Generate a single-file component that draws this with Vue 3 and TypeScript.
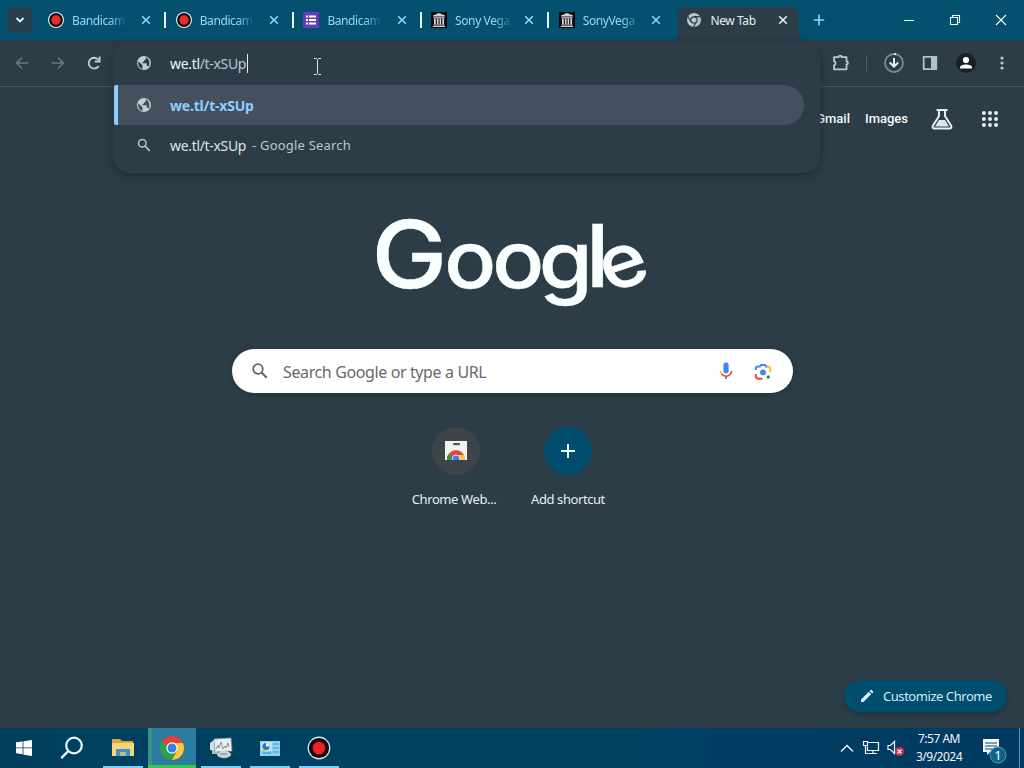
<script setup lang="ts">
interface Tab { title: string; icon: 'record' | 'list' | 'archive' | 'chrome'; width: number; active?: boolean; last?: boolean }
const tabs: Tab[] = [
  { title: 'Bandicam', icon: 'record', width: 54 },
  { title: 'Bandicam', icon: 'record', width: 54 },
  { title: 'Bandicam', icon: 'list', width: 54 },
  { title: 'Sony Vega', icon: 'archive', width: 56 },
  { title: 'SonyVega', icon: 'archive', width: 56, last: true },
  { title: 'New Tab', icon: 'chrome', width: 55, active: true },
]
const grid = [4, 10.2, 16.4]
</script>

<template>
  <div class="screen">
    <header class="strip">
      <div class="search-tabs">
        <svg width="12" height="12" viewBox="0 0 12 12"><path d="M2.500 4l3.500 3.500L9.500 4" fill="none" stroke="#e6f4fb" stroke-width="1.900" /></svg>
      </div>
      <div class="tabs">
        <div v-for="(t, i) in tabs" :key="i" class="tab" :class="{ active: t.active, plain: t.last }">
          <svg v-if="t.icon === 'record'" class="fav" viewBox="0 0 16 16"><circle cx="8" cy="8" r="8" fill="#e9edf0" /><circle cx="8" cy="8" r="6.900" fill="#140d10" /><circle cx="8" cy="8" r="4.700" fill="#e62b2b" /></svg>
          <svg v-else-if="t.icon === 'list'" class="fav" viewBox="0 0 16 16"><path fill="#673ab7" d="M0 0h16v16H0z" /><path fill="#fff" d="M3 3.500h2v2H3zm3 0h7v2H6zM3 7h2v2H3zm3 0h7v2H6zm-3 3.500h2v2H3zm3 0h7v2H6z" /></svg>
          <svg v-else-if="t.icon === 'archive'" class="fav" viewBox="0 0 16 16"><path fill="#090b0d" d="M0 0h16v16H0z" /><path fill="#d4d4d4" d="M8 1l6 2.500v1H2v-1zM2.500 5.200h11v1h-11zM3 6.500h1.800v6H3zm2.900 0h1.600v6H5.900zm2.700 0h1.600v6H8.600zm2.700 0h1.800v6h-1.800zM2.500 12.800h11v.8h-11zM2 14.100h12V15H2z" /></svg>
          <svg v-else class="fav" viewBox="0 0 16 16"><circle cx="8" cy="8" r="7" fill="#b9c5cc" /><circle cx="8" cy="8" r="3.200" fill="#b9c5cc" stroke="#2c3d47" stroke-width="1.200" /><path d="M8 4.700h6.300M5 9.700L2 4.500m8.500 5.300L7.500 15" stroke="#2c3d47" stroke-width="1.200" /></svg>
          <span class="tab-title" :style="{ width: t.width + 'px' }">{{ t.title }}</span>
          <svg class="close" width="10" height="10" viewBox="0 0 10 10"><path d="M1.200 1.200l7.600 7.600m0-7.600L1.200 8.800" stroke="currentColor" stroke-width="1.600" /></svg>
        </div>
      </div>
      <svg class="plus" width="12" height="12" viewBox="0 0 12 12"><path d="M6 .8v10.400M.8 6h10.400" stroke="#91d0f4" stroke-width="1.700" /></svg>
      <div class="controls">
        <svg viewBox="0 0 12 12"><path d="M1 6.500h10" /></svg>
        <svg viewBox="0 0 12 12"><path d="M1.500 3.500h7v7h-7zM3.500 3.500v-2h7v7h-2" /></svg>
        <svg viewBox="0 0 12 12"><path d="M1 1l10 10M11 1L1 11" /></svg>
      </div>
    </header>

    <div class="toolbar">
      <div class="nav">
        <svg class="dim" viewBox="0 0 16 16"><path d="M14.500 8H3M8 2.500L2.500 8 8 13.500" /></svg>
        <svg class="dim" viewBox="0 0 16 16"><path d="M1.500 8H13M8 2.500L13.500 8 8 13.500" /></svg>
        <svg viewBox="0 0 16 16"><path d="M12.700 11A5.400 5.400 0 1 1 12.300 4.700M13.600 1.600v4.900H8.800" /></svg>
      </div>
      <div class="actions">
        <svg class="puzzle" width="20" height="20" viewBox="0 0 20 20"><path d="M3 4.200h4.600a1.500 1.500 0 0 1 3 0h4.900v4.300a1.500 1.500 0 0 1 0 3v4.800H3v-4a2.200 2.200 0 0 0 0-4.200z" fill="none" stroke="#b9cad4" stroke-width="1.800" stroke-linejoin="round" /></svg>
        <i class="divider"></i>
        <svg width="20" height="20" viewBox="0 0 20 20"><circle cx="10" cy="10" r="9" fill="none" stroke="#7b8b95" stroke-width="1.800" /><path d="M10 1a9 9 0 0 1 2 .2" fill="none" stroke="#dce9f0" stroke-width="1.800" /><path d="M10 5v8.500M5.800 9.500L10 13.700l4.200-4.200" fill="none" stroke="#e4eff5" stroke-width="2" /></svg>
        <svg class="panel" width="16" height="16" viewBox="0 0 16 16"><path d="M1.700 1.800h12.600v12.400H1.700z" fill="none" stroke="#afc2ce" stroke-width="1.800" /><path d="M9 1.500h5v13H9z" fill="#afc2ce" /></svg>
        <svg class="profile" width="20" height="20" viewBox="0 0 20 20"><circle cx="10" cy="10" r="10" fill="#1c1e20" /><circle cx="10" cy="7" r="3.100" fill="#fff" /><path d="M4 15.500v-1c0-4 12-4 12 0v1z" fill="#fff" /></svg>
        <svg class="dots" width="4" height="16" viewBox="0 0 4 16"><g fill="#b9cad4"><circle cx="2" cy="3" r="1.600" /><circle cx="2" cy="8" r="1.600" /><circle cx="2" cy="13" r="1.600" /></g></svg>
      </div>
    </div>

    <main class="page">
      <nav class="links">
        <a>Gmail</a><a>Images</a>
        <svg class="flask" width="22" height="24" viewBox="0 0 22 24"><path d="M5.500 3h11M8 3v6L2 18.500c-1 1.700 0 3 1.500 3h15c1.500 0 2.500-1.300 1.500-3L14 9V3" fill="none" stroke="#e8f0f4" stroke-width="2" /><path d="M8 13h6l4 6.500H4z" fill="#dce6ea" /></svg>
        <svg width="20" height="20" viewBox="0 0 20.400 20.400"><template v-for="y in grid" :key="y"><circle v-for="x in grid" :key="x" :cx="x" :cy="y" r="2" fill="#e8f0f4" /></template></svg>
      </nav>
      <svg class="logo" width="280" height="100" viewBox="370 215 280 100" role="img" aria-label="Google">
        <text transform="translate(376 0) scale(1.090 1)" y="288 288 288 289.500 287 293" x="-6 60.800 104.900 147.500 190.500 212" rotate="0 0 0 0 0 -20"><tspan class="cap">G</tspan><tspan>oo</tspan><tspan class="low">g</tspan><tspan class="tall">l</tspan><tspan class="tilt">e</tspan></text>
      </svg>
      <div class="searchbox">
        <svg width="18" height="18" viewBox="0 0 18 18"><circle cx="7" cy="7" r="4.800" fill="none" stroke="#62666a" stroke-width="1.800" /><path d="M10.500 10.500l5.200 5.200" stroke="#62666a" stroke-width="2" /></svg>
        <span>Search Google or type a URL</span>
        <svg class="mic" width="14" height="20" viewBox="0 0 14 20"><rect x="4.400" y="1.400" width="5.200" height="11" rx="2.600" fill="#4285f4" /><path d="M1.500 10a5.500 5.500 0 0 0 1.600 3.600" fill="none" stroke="#fbbc04" stroke-width="1.600" /><path d="M2.700 13.100A5.500 5.500 0 0 0 12.500 10" fill="none" stroke="#ea4335" stroke-width="1.600" /><path d="M7 15.500V18" stroke="#34a853" stroke-width="1.800" /></svg>
        <svg class="lens" width="18" height="18" viewBox="0 0 18 18" fill="none" stroke-width="1.900"><path d="M1.800 7V5.800c0-1.500 1-2.300 2.300-2.300h2L7 2h4l1 1.500h1.500" stroke="#4285f4" /><path d="M13.200 3.500c2 0 3 1 3 2.600v3" stroke="#fbbc04" /><path d="M1.800 11v2c0 1.800 1 2.700 2.700 2.700h4" stroke="#ea4335" /><circle cx="9" cy="9.400" r="2.900" fill="#4285f4" /><circle cx="14.300" cy="14" r="1.700" fill="#34835a" /></svg>
      </div>
      <div class="shortcuts">
        <div class="shortcut">
          <div class="disc web"><svg width="24" height="24" viewBox="0 0 24 24"><path d="M1 2h22v19H1z" fill="#f1f3f3" /><rect x="9" y="4" width="7" height="2.200" rx="1" fill="#50575b" /><clipPath id="storeClip"><path d="M1 2h22v19H1z" /></clipPath><g clip-path="url(#storeClip)"><circle cx="12" cy="20" r="9" fill="#e14b3f" /><path d="M12 20L4.200 15.500A9 9 0 0 0 3 21h9z" fill="#279653" /><path d="M12 20l3-4h5c1 1.500 1.200 3 1 5h-9z" fill="#f6c844" /><circle cx="12" cy="20" r="4.200" fill="#fff" /><circle cx="12" cy="20" r="3.400" fill="#427cec" /></g></svg></div>
          <span class="web-label">Chrome Web...</span>
        </div>
        <div class="shortcut">
          <div class="disc add"><svg width="16" height="16" viewBox="0 0 16 16"><path d="M8 1v14M1 8h14" stroke="#f3faff" stroke-width="2" /></svg></div>
          <span class="add-label">Add shortcut</span>
        </div>
      </div>
      <button class="customize"><svg width="14" height="14" viewBox="0 0 14 14"><path d="M1 10.500L8.700 2.800l2.500 2.500L3.500 13H1zM9.500 2l1-1c.4-.4.8-.4 1.200 0L13 2.300c.4.4.4.8 0 1.200l-1 1z" fill="#d1edfc" /></svg><span>Customize Chrome</span></button>
    </main>

    <section class="omnibox">
      <div class="row entry">
        <svg class="globe" viewBox="0 0 16 16"><circle cx="8" cy="8" r="7" fill="#c2ccd3" /><path d="M2.300 6.200l4.200 4v3.600c-3-.7-5-3.600-4.200-7.600zM9.800 2.300v1.500c0 1-.9 1.500-1.800 1.500v1.400H6.500v1.500h4.200v2.600h1.200l.8 1C14 10 14 4 9.800 2.300z" fill="#2c3d47" /></svg>
        <span class="url"><b>we.tl</b>/t-xSUp</span><i class="caret"></i>
      </div>
      <div class="row selected">
        <svg class="globe" viewBox="0 0 16 16"><circle cx="8" cy="8" r="7" fill="#c2ccd3" /><path d="M2.300 6.200l4.200 4v3.600c-3-.7-5-3.600-4.200-7.600zM9.800 2.300v1.500c0 1-.9 1.500-1.800 1.500v1.400H6.500v1.500h4.200v2.600h1.200l.8 1C14 10 14 4 9.800 2.300z" fill="#44505d" /></svg>
        <span class="match">we.tl/t-xSUp</span>
      </div>
      <div class="row">
        <svg class="globe" viewBox="0 0 16 16"><circle cx="6.300" cy="6.300" r="3.800" fill="none" stroke="#b7c4cc" stroke-width="1.500" /><path d="M9 9l4.800 4.800" stroke="#b7c4cc" stroke-width="1.700" /></svg>
        <span class="query">we.tl/t-xSUp</span><span class="hint">- Google Search</span>
      </div>
    </section>
    <svg class="ibeam" width="9" height="17" viewBox="0 0 9 17"><path d="M1 .5h2.500l1 1 1-1H8M4.500 1.500v14M1 16.500h2.500l1-1 1 1H8" fill="none" stroke="#dde5e9" /></svg>

    <footer class="taskbar">
      <div class="task start"><svg width="16" height="16" viewBox="0 0 16 16"><path d="M0 2.300l6.600-.9v6H0zm7.400-1L16 0v7.400H7.400zM0 8.200h6.600v6L0 13.300zm7.400 0H16V16l-8.600-1.300z" fill="#fff" /></svg></div>
      <div class="task find"><svg width="24" height="24" viewBox="0 0 24 24"><circle cx="14" cy="9.500" r="7.800" fill="none" stroke="#eafaff" stroke-width="2.200" /><path d="M8.300 15l-7 7.200" stroke="#eafaff" stroke-width="2.400" /></svg></div>
      <div class="task open folder"><svg width="22" height="20" viewBox="0 0 22 20"><path d="M0 1h8l2 2h11v5H0z" fill="#dba83d" /><path d="M0 5h22v13H0z" fill="#f5d779" /><path d="M4 11h14v7h-4v-4H8v4H4z" fill="#428fca" /><path d="M8 14h6v4H8z" fill="#b9b98b" /></svg></div>
      <div class="task current"><svg width="24" height="24" viewBox="0 0 24 24"><circle cx="12" cy="12" r="12" fill="#e63f33" /><path d="M12 12L1.600 6A12 12 0 0 0 12 24l5-9z" fill="#25a352" /><path d="M12 7h10.900A12 12 0 0 1 12 24l5-9z" fill="#fbca32" /><circle cx="12" cy="12" r="5.700" fill="#fff" /><circle cx="12" cy="12" r="4.500" fill="#3f7ee2" /></svg></div>
      <div class="task open monitor"><svg width="24" height="22" viewBox="0 0 24 22"><path d="M1 6l5-4v12l-5-1z" fill="#d5dddf" /><path d="M3 13h6v4H3z" fill="#aebbc0" /><path d="M5 2l17-1 1 13-17 1z" fill="#e8eeef" stroke="#899ba3" stroke-width=".7" /><path d="M7 12l2-4 1 3 2-6 2 7 2-3 1 2 2-5 1 4" fill="none" stroke="#8296a1" /><ellipse cx="15" cy="17.500" rx="7" ry="3.700" fill="#c9d2d2" /><path d="M11 17h7" stroke="#7a888d" /></svg></div>
      <div class="task open panelapp"><svg width="20" height="15" viewBox="0 0 20 15"><path d="M0 0h20v15H0z" fill="#8bd2f4" /><path d="M1 1h11v9H1zm13 1h5v2h-5zm0 4h5v2h-5zm0 4h5v2h-5z" fill="#b7e6fa" /><circle cx="6" cy="5.500" r="3.500" fill="#2878b8" /><path d="M6 5.500V2a3.500 3.500 0 0 1 3.500 3.500z" fill="#e8f7fb" /><path d="M13 3h6m-6 4h6m-6 4h6M3 12h8" stroke="#2486bd" /><path d="M1 9h4v2H1z" fill="#d8c65a" /></svg></div>
      <div class="task open rec"><svg width="24" height="24" viewBox="0 0 24 24"><circle cx="12" cy="12" r="11.400" fill="#dce6ea" /><circle cx="12" cy="12" r="10.100" fill="#12090d" /><circle cx="12" cy="12" r="6.300" fill="#f02028" /></svg></div>
      <div class="tray">
        <svg width="14" height="9" viewBox="0 0 14 9"><path d="M1 7.500l6-6 6 6" fill="none" stroke="#f2f7fa" stroke-width="1.400" /></svg>
        <svg class="net" width="18" height="16" viewBox="0 0 18 16"><path d="M6 2.500h10.500v8H5.500v-4M11 10.500v3M7 13.500h8M1.500 1.500h4v4h-4zM3.500 5.500v8h3" fill="none" stroke="#f2f7fa" stroke-width="1.200" /></svg>
        <svg class="sound" width="18" height="17" viewBox="0 0 18 17"><path d="M1 5.500h2.500l4-4v12l-4-4H1z" fill="none" stroke="#f2f7fa" stroke-width="1.200" /><circle cx="12.500" cy="11.500" r="4.600" fill="#d12d3d" /><path d="M10.500 9.500l4 4m0-4l-4 4" stroke="#fff" stroke-width="1.200" /></svg>
        <div class="clock"><span>7:57 AM</span><span>3/9/2024</span></div>
        <svg class="notice" width="26" height="26" viewBox="0 0 26 26"><path d="M1 1h16v13H8l-3 3v-3H1z" fill="#f5fafc" /><path d="M3 5h12M3 8h12M3 11h8" stroke="#064868" /><circle cx="16" cy="17" r="8" fill="#09648b" stroke="#6595aa" /><text x="16" y="21.500" text-anchor="middle">1</text></svg>
      </div>
      <i class="desktop"></i>
    </footer>
  </div>
</template>

<style>
html, body { margin: 0; overflow: hidden; }
</style>
<style scoped>
* { box-sizing: border-box; }
svg { display: block; flex: none; }
.screen { position: relative; width: 1024px; height: 768px; overflow: hidden; display: flex; flex-direction: column; background: #2c3d47; font-family: "Noto Sans", "Open Sans", sans-serif; }
.strip { height: 40px; display: flex; background: #04506f; flex: none; }
.search-tabs { width: 26px; height: 26px; margin: 7px 8px 0 7px; border-radius: 8px; background: #263e4e; display: grid; place-items: center; }
.tabs { display: flex; width: 758px; }
.tab { width: 127.700px; height: 40px; padding-left: 7px; display: flex; align-items: center; position: relative; color: #96d5f5; flex: none; }
.tab:not(.active):not(.plain)::after { content: ""; width: 2px; height: 16px; margin: 0 2.500px 0 13px; background: #e5f3f7; }
.tab.active { width: 120px; height: 33px; margin: 7px 0 0 -1px; padding: 0 0 7px 8px; border-radius: 8px 8px 0 0; background: #2c3d47; color: #e3edf2; }
.tab.active::after { content: ""; position: absolute; right: -8px; bottom: 0; width: 8px; height: 8px; background: radial-gradient(circle at 100% 0, transparent 7.500px, #2c3d47 8px); }
.fav { width: 16px; height: 16px; }
.tab-title { margin: 1px 0 0 8px; font-size: 12px; line-height: 18px; overflow: hidden; white-space: nowrap; letter-spacing: -.4px; -webkit-mask-image: linear-gradient(90deg, #000 70%, #0002 98%); }
.active .tab-title { -webkit-mask-image: none; letter-spacing: -.4px; }
.close { margin-left: auto; margin-right: 10px; }
.tab:not(.active):not(.plain) .close { margin-right: 0; }
.tab.plain .close { margin-right: 18px; }
.plus { margin: 14px 0 0 14px; }
.controls { margin-left: auto; display: flex; gap: 34px; padding: 14px 17px 0 0; }
.controls svg { width: 12px; height: 12px; fill: none; stroke: #f3fafc; stroke-width: 1.100; }
.toolbar { height: 47px; flex: none; display: flex; align-items: center; justify-content: space-between; border-bottom: 1px solid #435460; }
.nav { display: flex; gap: 20px; padding-left: 14px; }
.nav svg { width: 16px; height: 16px; fill: none; stroke: #c4d0d7; stroke-width: 1.800; }
.nav .dim { stroke: #6a7983; stroke-width: 1.500; }
.actions { display: flex; align-items: center; padding-right: 20px; }
.divider { width: 1px; height: 16px; background: #50616e; margin: 0 17px 0 15px; }
.panel { margin-left: 18px; }
.profile { margin-left: 18px; }
.dots { margin-left: 24px; }
.page { position: relative; height: 641px; display: flex; flex-direction: column; align-items: center; flex: none; }
.links { align-self: flex-end; height: 64px; padding-right: 24px; display: flex; align-items: center; color: #f2f7f9; font: 500 13px Roboto, sans-serif; }
.links a { padding-bottom: 2px; }
.links a + a { margin-left: 15px; }
.flask { margin: 0 27px 0 23px; }
.logo { margin: 64px 0 0; overflow: visible; }
.logo text { font-family: Inter, sans-serif; font-weight: 500; font-size: 79px; fill: #fbffff; stroke: #fbffff; stroke-width: .4px; }
.logo .cap { font-size: 93px; }
.logo .low { font-size: 80px; }
.logo .tall { font-size: 87px; }
.logo .tilt { font-size: 74px; }
.searchbox { width: 561px; height: 44px; margin: 34px 0 0 1px; padding: 0 21px 0 19px; border-radius: 22px; background: #fff; display: flex; align-items: center; color: #67696b; font-size: 16px; box-shadow: 0 1px 5px #23303a; }
.searchbox span { margin: 2px auto 0 14px; letter-spacing: -.38px; }
.mic { margin: 0 21px 0 0; }
.lens { margin-top: 2px; }
.shortcuts { display: flex; margin-top: 34px; }
.shortcut { width: 112px; display: flex; flex-direction: column; align-items: center; color: #e5eff5; font-size: 13px; line-height: 18px; white-space: nowrap; }
.disc { width: 48px; height: 48px; border-radius: 50%; display: grid; place-items: center; margin-bottom: 15px; }
.web { background: #3e454a; }
.add { background: #004d6d; }
.web-label { letter-spacing: -.4px; margin-left: -4px; }
.add-label { letter-spacing: -.42px; }
.customize { position: absolute; right: 17px; bottom: 16px; width: 163px; height: 32px; border: 0; border-radius: 16px; padding: 0 0 0 16px; display: flex; align-items: center; background: #004d6d; color: #d0ecfb; font: 13px "Noto Sans", sans-serif; box-shadow: 0 2px 4px #1c303e; }
.customize span { margin-left: 9px; white-space: nowrap; letter-spacing: -.45px; }
.omnibox { position: absolute; left: 114px; top: 42px; width: 706px; height: 131px; border-radius: 16px; background: #2c3d47; box-shadow: 0 3px 10px #17242c99; color: #dae4e9; font-size: 14px; }
.row { height: 40px; display: flex; align-items: center; padding-left: 22px; }
.entry { height: 42px; margin-bottom: 1px; }
.selected { width: 690px; border-left: 4px solid #8fcdff; border-radius: 2px 20px 20px 2px; padding-left: 18px; background: #44505d; }
.globe { width: 16px; height: 16px; margin-right: 18px; }
.url { color: #b9c7cf; }
.url b { color: #edf6fa; font-weight: 400; }
.url, .query { letter-spacing: -.33px; }
.caret { width: 1px; height: 19px; margin-left: 1px; background: #e5edf1; }
.match { color: #8ccfff; font-weight: 700; letter-spacing: -.2px; }
.hint { margin-left: 6px; color: #b9c7cf; font-size: 13px; letter-spacing: .2px; }
.ibeam { position: absolute; left: 313px; top: 58px; }
.taskbar { height: 40px; flex: none; display: flex; background: linear-gradient(90deg, #00405f, #004162 60%, #003a61); position: relative; }
.task { height: 40px; display: grid; place-items: center; flex: none; }
.start { width: 48px; }
.find { width: 48px; }
.open { width: 40px; border-bottom: 2px solid #79cff8; padding-top: 2px; }
.folder { margin: 0 5px 0 7px; }
.current { width: 48px; padding-top: 3px; background: linear-gradient(90deg, #389184 4px, #2c7ba0 4px); border-bottom: 3px solid #39ca4c; }
.monitor { margin-left: 5px; }
.panelapp { margin-left: 9px; }
.rec { margin-left: 9px; }
.tray { display: flex; align-items: center; margin-left: auto; padding-right: 16px; }
.net { margin-left: 8px; }
.sound { margin-left: 7px; }
.clock { width: 54px; margin-left: 7px; color: #f0f6fa; font-size: 12px; line-height: 18px; display: flex; flex-direction: column; align-items: center; letter-spacing: -.5px; white-space: nowrap; }
.notice { margin: 5px 0 0 16px; }
.notice text { font: 13px "Noto Sans", sans-serif; fill: #fff; }
.desktop { position: absolute; right: 4px; top: 0; height: 40px; width: 1px; background: #638ba2; }
</style>
